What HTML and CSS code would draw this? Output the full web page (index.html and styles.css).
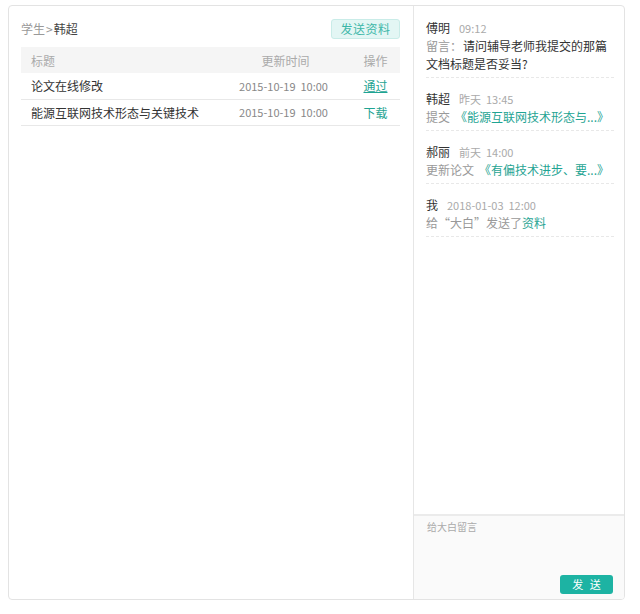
FILE: index.html
```html
<!DOCTYPE html>
<html lang="zh-CN">
<head>
<meta charset="utf-8">
<title>学生 韩超</title>
<link rel="stylesheet" href="styles.css">
</head>
<body>
<div class="frame">
  <section class="main">
    <div class="toolbar">
      <div class="crumb"><span class="crumb-parent">学生</span><span class="crumb-sep">&gt;</span><span class="crumb-cur">韩超</span></div>
      <button class="btn-send-file">发送资料</button>
    </div>
    <table class="docs">
      <colgroup><col class="col-title"><col class="col-time"><col class="col-op"></colgroup>
      <thead>
        <tr><th class="c-title">标题</th><th class="c-time">更新时间</th><th class="c-op">操作</th></tr>
      </thead>
      <tbody>
        <tr><td class="c-title">论文在线修改</td><td class="c-time">2015-10-19&nbsp;&nbsp;10:00</td><td class="c-op"><a class="link link-u">通过</a></td></tr>
        <tr><td class="c-title">能源互联网技术形态与关键技术</td><td class="c-time">2015-10-19&nbsp;&nbsp;10:00</td><td class="c-op"><a class="link">下载</a></td></tr>
      </tbody>
    </table>
  </section>
  <aside class="side">
    <div class="feed">
      <div class="entry">
        <div class="entry-head"><span class="who">傅明</span><span class="when">09:12</span></div>
        <div class="entry-msg"><span class="label label-colon">留言：</span>请问辅导老师我提交的那篇文档标题是否妥当?</div>
      </div>
      <div class="entry">
        <div class="entry-head"><span class="who">韩超</span><span class="when">昨天&nbsp;&nbsp;13:45</span></div>
        <div class="entry-msg"><span class="label">提交</span><a class="link link-gap">《能源互联网技术形态与...》</a></div>
      </div>
      <div class="entry">
        <div class="entry-head"><span class="who">郝丽</span><span class="when">前天&nbsp;&nbsp;14:00</span></div>
        <div class="entry-msg"><span class="label">更新论文</span><a class="link link-gap">《有偏技术进步、要...》</a></div>
      </div>
      <div class="entry">
        <div class="entry-head"><span class="who">我</span><span class="when">2018-01-03&nbsp;&nbsp;12:00</span></div>
        <div class="entry-msg"><span class="label">给“大白”发送了</span><a class="link">资料</a></div>
      </div>
    </div>
    <div class="compose">
      <textarea class="compose-input" placeholder="给大白留言"></textarea>
      <div class="compose-actions"><button class="btn-send">发 送</button></div>
    </div>
  </aside>
</div>
</body>
</html>
```

FILE: styles.css
```css
html, body {
  margin: 0;
  padding: 0;
  background: #fff;
}
body {
  font-family: "Noto Sans CJK SC", "Noto Sans", sans-serif;
  font-size: 12px;
  color: #333;
}
.frame {
  box-sizing: border-box;
  margin: 5px 0 0 8px;
  width: 617px;
  height: 595px;
  border: 1px solid #e3e3e3;
  border-radius: 4px;
  display: flex;
  overflow: hidden;
}
.main {
  box-sizing: border-box;
  width: 405px;
  border-right: 1px solid #e6e6e6;
  padding: 13px 13px 0 12px;
}
.toolbar {
  display: flex;
  justify-content: space-between;
  align-items: center;
  height: 20px;
  margin-bottom: 8px;
}
.crumb {
  font-size: 12px;
  line-height: 20px;
}
.crumb-parent, .crumb-sep { color: #999; }
.crumb-sep { margin: 0 1px; }
.crumb-cur { color: #444; }
.btn-send-file {
  box-sizing: border-box;
  height: 20px;
  width: 69px;
  padding: 0;
  border: 1px solid #c9ece8;
  border-radius: 3px;
  background: #e3f6f4;
  color: #3db6a8;
  font-family: inherit;
  font-size: 12px;
  line-height: 18px;
  letter-spacing: 0.5px;
}
.docs {
  width: 379px;
  border-collapse: collapse;
  table-layout: fixed;
}
.col-title { width: 199px; }
.col-time { width: 131px; }
.col-op { width: 49px; }
.docs th, .docs td {
  box-sizing: border-box;
  padding: 0;
  font-weight: normal;
  white-space: nowrap;
}
.docs th {
  height: 26px;
  background: #f5f5f5;
  color: #aaa;
  font-size: 12px;
}
.docs td {
  height: 26px;
  border-bottom: 1px solid #e8e8e8;
  font-size: 12px;
}
.c-title { text-align: left; padding-left: 10px !important; }
.c-time { text-align: center; }
.c-op { text-align: center; }
td.c-time { color: #888; font-size: 11px !important; padding-right: 4px !important; }
td.c-title { color: #333; }
.link {
  color: #1fa493;
  text-decoration: none;
  cursor: pointer;
}
.link-u { text-decoration: underline; }

.side {
  flex: 1;
  display: flex;
  flex-direction: column;
  min-width: 0;
}
.feed {
  flex: 1;
  padding: 13px 10px 0 12px;
}
.entry {
  padding: 0 0 4px;
  border-bottom: 1px dashed #e8e8e8;
}
.entry + .entry { padding-top: 12px; }
.entry-head {
  line-height: 18px;
  height: 18px;
}
.who {
  color: #333;
  font-size: 12px;
  margin-right: 9px;
}
.when {
  color: #aaa;
  font-size: 11px;
}
.entry-msg {
  line-height: 18px;
  font-size: 12px;
  color: #333;
}
.label { color: #999; }
.label-colon { margin-right: 1px; }
.link-gap { margin-left: 5px; }

.compose {
  box-sizing: border-box;
  height: 85px;
  border-top: 2px solid #ebebeb;
  background: #fafafa;
  display: flex;
  flex-direction: column;
}
.compose-input {
  flex: 1;
  border: none;
  background: transparent;
  resize: none;
  outline: none;
  padding: 4px 13px 0;
  font-family: inherit;
  font-size: 10px;
  line-height: 14px;
  color: #333;
}
.compose-input::placeholder { color: #aaa; }
.compose-actions {
  display: flex;
  justify-content: flex-end;
  padding: 0 11px 5px 0;
}
.btn-send {
  box-sizing: border-box;
  width: 53px;
  height: 19px;
  padding: 0;
  border: none;
  border-radius: 3px;
  background: #1db3a3;
  color: #fff;
  font-family: inherit;
  font-size: 11px;
  line-height: 19px;
  letter-spacing: 2px;
  text-indent: 2px;
}
```
